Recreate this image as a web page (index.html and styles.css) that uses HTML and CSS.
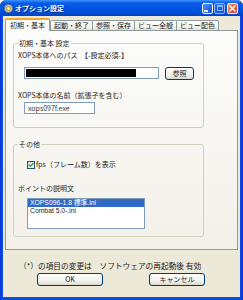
FILE: index.html
```html
<!DOCTYPE html>
<html lang="ja">
<head>
<meta charset="utf-8">
<title>オプション設定</title>
<link rel="stylesheet" href="styles.css">
</head>
<body>
<div class="window">
  <div class="titlebar">
    <svg class="app-icon" width="9" height="9" viewBox="0 0 9 9">
      <circle cx="4.5" cy="4.5" r="4" fill="#d8d4c4" stroke="#6d6a60" stroke-width="0.8"/>
      <circle cx="4.5" cy="4.5" r="2.2" fill="#f5d24a" stroke="#a07818" stroke-width="0.6"/>
      <circle cx="4.5" cy="4.5" r="0.8" fill="#fff"/>
    </svg>
    <span class="title">オプション設定</span>
    <div class="caption-buttons">
      <span class="cbtn min"><span class="min-bar"></span></span>
      <span class="cbtn max"><span class="max-box"></span></span>
      <span class="cbtn close">
        <svg width="9" height="9" viewBox="0 0 9 9"><path d="M2 2 L7 7 M7 2 L2 7" stroke="#fff" stroke-width="1.4" stroke-linecap="square"/></svg>
      </span>
    </div>
  </div>
  <div class="client">
    <div class="tabs">
      <div class="tab active">初期・基本</div>
      <div class="tab">起動・終了</div>
      <div class="tab">参照・保存</div>
      <div class="tab">ビュー全般</div>
      <div class="tab">ビュー配色</div>
    </div>
    <div class="panel">
      <div class="group group-basic">
        <div class="legend">初期・基本 設定</div>
        <div class="label label-path">XOPS本体へのパス　【-設定必須-】</div>
        <div class="row">
          <div class="input path"><span class="redact"></span></div>
          <div class="button browse">参照</div>
        </div>
        <div class="label label-name">XOPS本体の名前（拡張子を含む）</div>
        <div class="input name">xops097f.exe</div>
      </div>
      <div class="group group-other">
        <div class="legend">その他</div>
        <div class="check">
          <span class="box">
            <svg width="6" height="6" viewBox="0 0 6 6"><path d="M0.8 2.8 L2.4 4.4 L5.3 1.2" fill="none" stroke="#21a121" stroke-width="1.3"/></svg>
          </span>
          <span>fps（フレーム数）を表示</span>
        </div>
        <div class="label label-point">ポイントの説明文</div>
        <div class="listbox">
          <div class="item selected">XOPS096-1.8 標準.ini</div>
          <div class="item">Combat 5.0-.ini</div>
        </div>
      </div>
    </div>
    <div class="note">（*）の項目の変更は　ソフトウェアの再起動後 有効</div>
    <div class="actions">
      <div class="button ok">OK</div>
      <div class="button cancel">キャンセル</div>
    </div>
  </div>
</div>
</body>
</html>
```
FILE: styles.css
```css
* { box-sizing: border-box; }
html, body { margin: 0; padding: 0; }
body {
  width: 243px;
  height: 300px;
  font-family: "Noto Sans CJK JP", "Noto Sans", sans-serif;
  font-size: 7px;
  line-height: 9px;
  color: #1c1c1c;
  background: #fff;
}
.window {
  width: 243px;
  height: 300px;
  display: flex;
  flex-direction: column;
  background: linear-gradient(90deg, #0831d9 0, #0a4be0 2px, #0a4be0 240px, #0831d9 243px);
  border-radius: 6px 6px 0 0;
  overflow: hidden;
}
.titlebar {
  height: 16px;
  flex: none;
  display: flex;
  align-items: center;
  padding: 0 5px 0 4px;
  background: linear-gradient(180deg, #3d95ff 0, #0a5ae8 3px, #0054e3 8px, #0050d8 13px, #0041c0 16px);
}
.app-icon { flex: none; margin-right: 2px; }
.title {
  color: #fff;
  font-weight: bold;
  font-size: 7px;
  line-height: 9px;
  text-shadow: 1px 1px 0 #0a2a8a;
}
.caption-buttons {
  margin-left: auto;
  display: flex;
  gap: 1px;
  align-items: center;
}
.cbtn {
  width: 11px;
  height: 11px;
  border: 1px solid #fff;
  border-radius: 2px;
  background: linear-gradient(135deg, #4f8ff7 0, #2a66e6 60%, #1d4fcf 100%);
  display: flex;
  align-items: center;
  justify-content: center;
}
.cbtn.max { opacity: 0.55; }
.cbtn.close {
  margin-left: 1px;
  background: linear-gradient(135deg, #f09a7a 0, #e0593a 55%, #c63e20 100%);
}
.min-bar {
  width: 4px;
  height: 2px;
  background: #fff;
  margin: 5px 3px 0 0;
}
.max-box {
  width: 6px;
  height: 6px;
  border: 1px solid #fff;
  border-top-width: 2px;
}
.client {
  flex: 1;
  margin: 0 3px 3px 3px;
  background: #ece9d8;
  padding: 2px 2px 0 2px;
  display: flex;
  flex-direction: column;
  min-height: 0;
}
.client > * { flex: none; }
.tabs {
  display: flex;
  align-items: flex-end;
  height: 12px;
  position: relative;
  z-index: 1;
}
.tab {
  height: 10px;
  line-height: 9px;
  padding: 0 3px;
  border: 1px solid #919b9c;
  border-bottom: none;
  border-radius: 2px 2px 0 0;
  background: linear-gradient(180deg, #ffffff, #f3f2ec 60%, #e6e4d8);
  white-space: nowrap;
  margin-right: -1px;
  overflow: hidden;
}
.tab.active {
  height: 13px;
  margin-bottom: -1px;
  padding: 1px 4px 0;
  border-top: 2px solid #f5a62c;
  background: #fcfcfb;
  margin-right: 0;
  position: relative;
  z-index: 2;
}
.panel {
  height: 220px;
  overflow: hidden;
  border: 1px solid #919b9c;
  background: linear-gradient(180deg, #fcfcfb 0, #f6f5f0 60%, #f2f0e8 100%);
  padding: 12px 0 0 7px;
}
.group {
  width: 191px;
  border: 1px solid #d0d0bf;
  border-radius: 3px;
  padding: 0 0 0 4px;
}
.legend {
  display: table;
  margin-top: -5px;
  padding: 0 1px;
  height: 9px;
  line-height: 9px;
  color: #2a2a2a;
  background: #fbfbf9;
}
.group-basic { height: 85px; }
.group-other { margin-top: 16px; height: 93px; }
.group-other .legend { background: #f8f7f3; }
.label { height: 9px; white-space: nowrap; }
.label-path { margin-top: 3px; }
.row {
  display: flex;
  align-items: flex-start;
  gap: 6px;
  height: 13px;
  margin: 7px 0 0 6px;
}
.input {
  height: 12px;
  border: 1px solid #7f9db9;
  background: #fff;
  line-height: 10px;
  padding: 0 3px;
  white-space: nowrap;
}
.input.path { width: 135px; padding: 1px; }
.redact {
  display: block;
  width: 110px;
  height: 8px;
  background: #000;
}
.input.name { width: 71px; margin: 2px 0 0 6px; color: #333; }
.label-name { margin-top: 11px; }
.button {
  height: 13px;
  border: 1px solid #003c74;
  border-radius: 3px;
  background: linear-gradient(180deg, #ffffff 0, #f4f4f0 50%, #e8e6dd 85%, #d6d0c5 100%);
  display: flex;
  align-items: center;
  justify-content: center;
  line-height: 9px;
  color: #222;
}
.button.browse { width: 29px; flex: none; }
.check {
  display: flex;
  align-items: center;
  gap: 1px;
  height: 9px;
  margin: 11px 0 0 9px;
}
.box {
  width: 8px;
  height: 8px;
  border: 1px solid #1c5180;
  background: linear-gradient(135deg, #dcdcd7, #ffffff);
  display: flex;
  align-items: center;
  justify-content: center;
}
.label-point { margin-top: 15px; }
.listbox {
  width: 118px;
  height: 31px;
  margin: 5px 0 0 9px;
  border: 1px solid #7f9db9;
  background: #fff;
  overflow: hidden;
}
.item {
  height: 8px;
  line-height: 8px;
  font-family: "Liberation Sans", "Noto Sans CJK JP", sans-serif;
  font-size: 6.8px;
  padding-left: 2px;
  white-space: nowrap;
  overflow: hidden;
}
.item.selected { background: #316ac5; color: #fff; }
.note {
  margin-top: 11px;
  padding-left: 14px;
  font-size: 7.7px;
  height: 10px;
  line-height: 10px;
  white-space: nowrap;
}
.actions {
  display: flex;
  margin-top: 2px;
  padding-left: 32px;
}
.button.ok { width: 66px; }
.button.cancel { width: 56px; margin-left: 46px; }
```
